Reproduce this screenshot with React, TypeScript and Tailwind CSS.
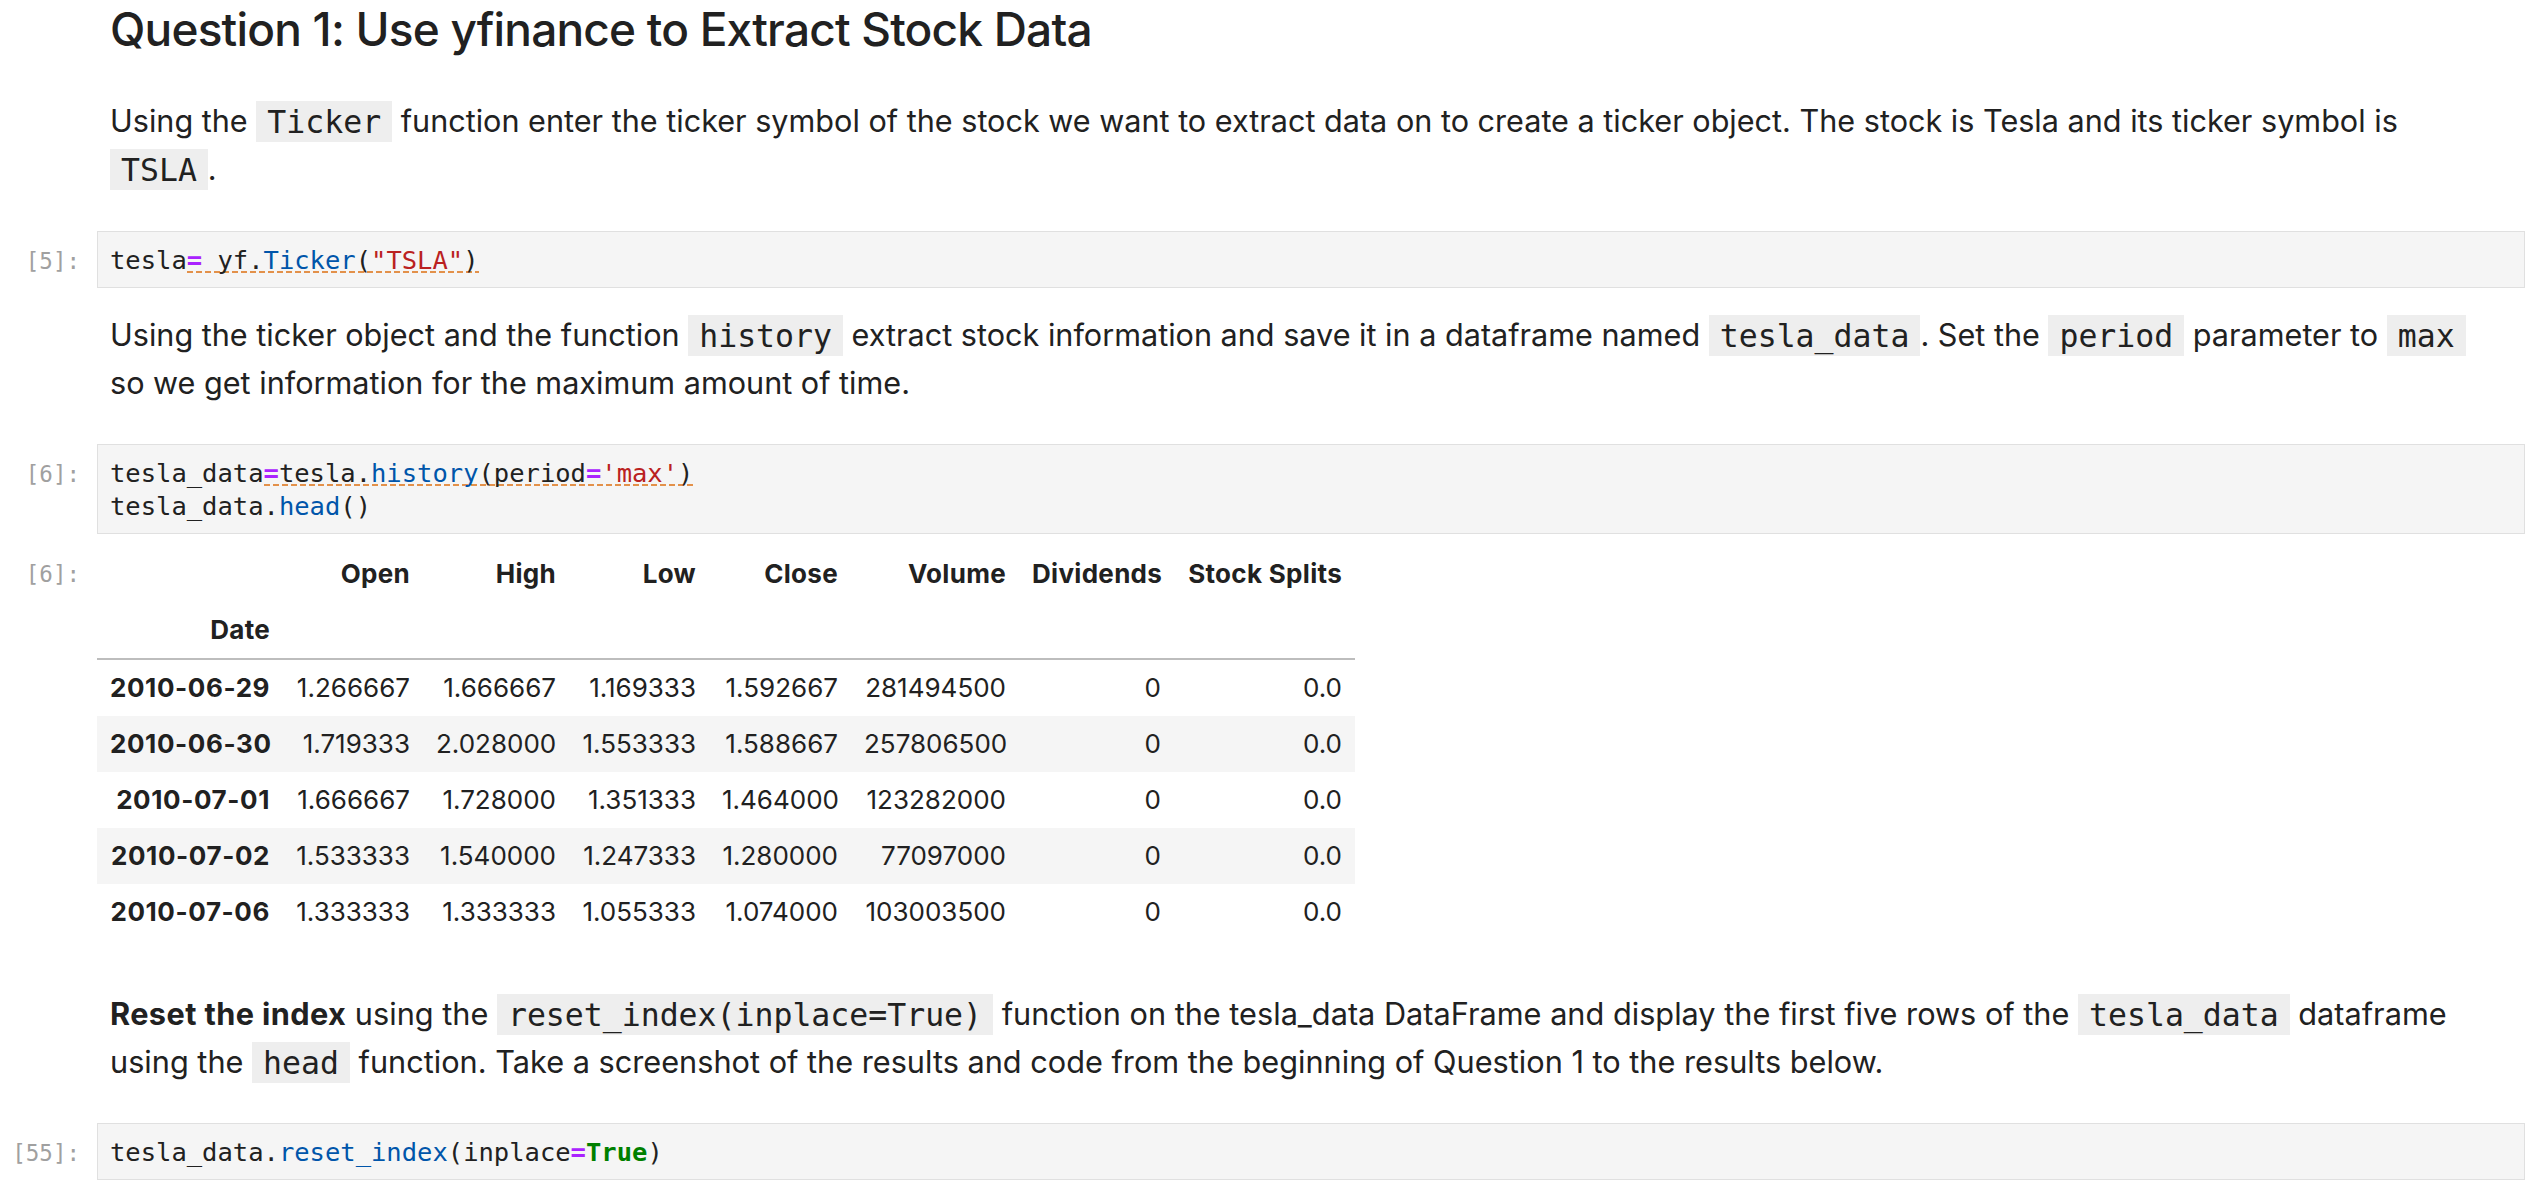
import React from "react";

const C = ({ children }: { children: React.ReactNode }) => (
  <code className="bg-[#eeeeee] px-[11px] py-[2.5px] font-['DejaVu_Sans_Mono',monospace] text-[31.5px]">
    {children}
  </code>
);

const Op = ({ children }: { children: React.ReactNode }) => (
  <span className="text-[#aa22ff] font-bold">{children}</span>
);
const Pr = ({ children }: { children: React.ReactNode }) => (
  <span className="text-[#0055aa]">{children}</span>
);
const St = ({ children }: { children: React.ReactNode }) => (
  <span className="text-[#ba2121]">{children}</span>
);
const Kw = ({ children }: { children: React.ReactNode }) => (
  <span className="text-[#008000] font-bold">{children}</span>
);
const Warn = ({ children }: { children: React.ReactNode }) => (
  <span className="bg-[linear-gradient(to_right,#e3914a_62%,transparent_62%)] bg-[length:9px_2px] bg-repeat-x bg-[position:0_calc(100%-2px)]">
    {children}
  </span>
);

const Prompt = ({ children }: { children: React.ReactNode }) => (
  <div className="w-[97px] shrink-0 pr-[17px] pt-[14px] text-right font-['DejaVu_Sans_Mono',monospace] text-[22.5px] leading-[33px] text-[#a0a0a0]">
    {children}
  </div>
);

const CodeCell = ({ n, children, mt }: { n: string; children: React.ReactNode; mt: string }) => (
  <div className={`flex ${mt}`}>
    <Prompt>{n}</Prompt>
    <div className="w-[2428px] border border-[#e0e0e0] bg-[#f5f5f5] pl-[12px] pt-[12px] pb-[10px] font-['DejaVu_Sans_Mono',monospace] text-[25.5px] leading-[33px] text-[#212121] whitespace-pre">
      {children}
    </div>
  </div>
);

const rows = [
  ["2010-06-29", "1.266667", "1.666667", "1.169333", "1.592667", "281494500", "0", "0.0"],
  ["2010-06-30", "1.719333", "2.028000", "1.553333", "1.588667", "257806500", "0", "0.0"],
  ["2010-07-01", "1.666667", "1.728000", "1.351333", "1.464000", "123282000", "0", "0.0"],
  ["2010-07-02", "1.533333", "1.540000", "1.247333", "1.280000", "77097000", "0", "0.0"],
  ["2010-07-06", "1.333333", "1.333333", "1.055333", "1.074000", "103003500", "0", "0.0"],
];

const cols = ["Open", "High", "Low", "Close", "Volume", "Dividends", "Stock Splits"];

export default function App() {
  return (
    <div className="w-[2533px] h-[1192px] overflow-hidden bg-white font-['Inter',sans-serif] text-[#212121]">
      <h1 className="pl-[110px] text-[46px] leading-[58px] font-medium tracking-[-0.8px] whitespace-nowrap">
        Question 1: Use yfinance to Extract Stock Data
      </h1>

      <p className="mt-[39px] pl-[110px] text-[30.6px] leading-[48px] whitespace-nowrap">
        Using the <C>Ticker</C> function enter the ticker symbol of the stock we want to extract data on to create a
        ticker object. The stock is Tesla and its ticker symbol is
        <br />
        <C>TSLA</C>.
      </p>

      <CodeCell n="[5]:" mt="mt-[38px]">
        tesla
        <Warn>
          <Op>=</Op> yf.<Pr>Ticker</Pr>(<St>"TSLA"</St>)
        </Warn>
      </CodeCell>

      <p className="mt-[23px] pl-[110px] text-[30.6px] leading-[48px] whitespace-nowrap">
        Using the ticker object and the function <C>history</C> extract stock information and save it in a dataframe
        named <C>tesla_data</C>. Set the <C>period</C> parameter to <C>max</C>
        <br />
        so we get information for the maximum amount of time.
      </p>

      <CodeCell n="[6]:" mt="mt-[37px]">
        tesla_data
        <Warn>
          <Op>=</Op>tesla.<Pr>history</Pr>(period<Op>=</Op>
          <St>'max'</St>)
        </Warn>
        {"\n"}
        tesla_data.<Pr>head</Pr>()
      </CodeCell>

      <div className="mt-[12px] flex">
        <div className="w-[97px] shrink-0 pr-[17px] pt-[13px] text-right font-['DejaVu_Sans_Mono',monospace] text-[22.5px] leading-[30px] text-[#a0a0a0]">
          [6]:
        </div>
        <table className="border-separate border-spacing-0 table-fixed w-[1258px] text-[26px] leading-[30px] text-[#212121]">
          <colgroup>
            <col className="w-[186px]" />
            <col className="w-[140px]" />
            <col className="w-[146px]" />
            <col className="w-[140px]" />
            <col className="w-[142px]" />
            <col className="w-[168px]" />
            <col className="w-[155px]" />
            <col className="w-[181px]" />
          </colgroup>
          <thead>
            <tr>
              <th className="px-[13px] py-[13px]"></th>
              {cols.map((c) => (
                <th key={c} className="px-[13px] py-[13px] text-right font-bold whitespace-nowrap tracking-[0.3px]">
                  {c}
                </th>
              ))}
            </tr>
            <tr>
              <th className="px-[13px] py-[13px] text-right font-bold border-b-2 border-[#bdbdbd] tracking-[0.3px]">
                Date
              </th>
              {cols.map((c) => (
                <th key={c} className="px-[13px] py-[13px] border-b-2 border-[#bdbdbd]"></th>
              ))}
            </tr>
          </thead>
          <tbody>
            {rows.map((r, i) => (
              <tr key={r[0]} className={i % 2 === 1 ? "bg-[#f5f5f5]" : "bg-white"}>
                <th className="px-[13px] py-[13px] text-right font-bold whitespace-nowrap tracking-[0.6px]">
                  {r[0]}
                </th>
                {r.slice(1).map((v, j) => (
                  <td key={j} className="px-[13px] py-[13px] text-right whitespace-nowrap">
                    {v}
                  </td>
                ))}
              </tr>
            ))}
          </tbody>
        </table>
      </div>

      <p className="mt-[50px] pl-[110px] text-[30.7px] leading-[48px] whitespace-nowrap">
        <b className="font-bold tracking-[0.4px]">Reset the index</b> using the <C>reset_index(inplace=True)</C>{" "}
        function on the tesla_data DataFrame and display the first five rows of the <C>tesla_data</C> dataframe
        <br />
        using the <C>head</C> function. Take a screenshot of the results and code from the beginning of Question 1 to
        the results below.
      </p>

      <CodeCell n="[55]:" mt="mt-[37px]">
        tesla_data.<Pr>reset_index</Pr>(inplace<Op>=</Op>
        <Kw>True</Kw>)
      </CodeCell>
    </div>
  );
}
